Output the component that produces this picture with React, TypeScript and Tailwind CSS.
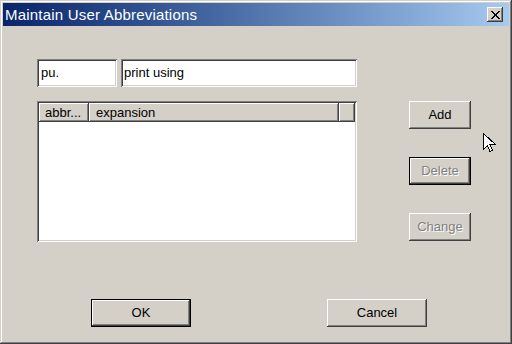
import React from "react";

const raised =
  "shadow-[inset_-1px_-1px_#404040,inset_1px_1px_#ffffff,inset_-2px_-2px_#808080,inset_2px_2px_#d4d0c8]";
const sunken =
  "shadow-[inset_1px_1px_#808080,inset_-1px_-1px_#ffffff,inset_2px_2px_#404040,inset_-2px_-2px_#d4d0c8]";

function Btn({
  label,
  w,
  disabled,
  isDefault,
}: {
  label: string;
  w: string;
  disabled?: boolean;
  isDefault?: boolean;
}) {
  const inner = (
    <div
      className={`flex-1 h-full flex items-center justify-center bg-[#d4d0c8] ${raised} ${
        disabled ? "text-[#808080] [text-shadow:1px_1px_0_#ffffff]" : "text-black"
      }`}
    >
      {label}
    </div>
  );
  return (
    <div className={`${w} h-[28px] flex ${isDefault ? "border border-black" : ""}`}>
      {inner}
    </div>
  );
}

export default function App() {
  return (
    <div
      className={`relative w-[512px] h-[344px] bg-[#d4d0c8] p-[3px] flex flex-col text-[13px] text-black shadow-[inset_-1px_-1px_#404040,inset_1px_1px_#d4d0c8,inset_-2px_-2px_#808080,inset_2px_2px_#ffffff]`}
      style={{ fontFamily: '"Liberation Sans", Arial, sans-serif' }}
    >
      {/* Title bar */}
      <div className="h-[23px] flex items-center pl-[2px] pr-[6px] bg-gradient-to-r from-[#0a246a] to-[#a6caf0]">
        <div className="flex-1 text-white text-[15px] tracking-[0.2px] leading-none">
          Maintain User Abbreviations
        </div>
        <div className={`w-[16px] h-[15px] bg-[#d4d0c8] flex items-center justify-center ${raised}`}>
          <svg width="9" height="8" viewBox="0 0 9 8" shapeRendering="crispEdges">
            <path
              d="M0 0h2v1h1v1h1v1h1V2h1V1h1V0h2v1H8v1H7v1H6v2h1v1h1v1h1v1H7V7H6V6H5V5H4v1H3v1H2v1H0V7h1V6h1V5h1V3H2V2H1V1H0z"
              fill="#000"
            />
          </svg>
        </div>
      </div>

      {/* Body */}
      <div className="flex-1 flex flex-col pl-[34px] pt-[33px]">
        <div className="flex">
          <div className="w-[320px] flex flex-col">
            <div className="flex gap-[4px] h-[28px]">
              <div className={`w-[80px] h-full bg-white flex items-center pl-[4px] pb-[1px] ${sunken}`}>
                pu.
              </div>
              <div className={`w-[236px] h-full bg-white flex items-center pl-[3px] pb-[1px] ${sunken}`}>
                print using
              </div>
            </div>
            <div className={`mt-[14px] h-[141px] bg-white p-[2px] flex flex-col ${sunken}`}>
              <div className="h-[19px] flex bg-[#d4d0c8]">
                <div className={`w-[50px] h-full flex items-center pl-[6px] ${raised}`}>abbr...</div>
                <div className={`w-[250px] h-full flex items-center pl-[7px] ${raised}`}>expansion</div>
                <div className={`flex-1 h-full ${raised}`} />
              </div>
            </div>
          </div>
          <div className="ml-[52px] mt-[42px] flex flex-col gap-[28px]">
            <Btn label="Add" w="w-[62px]" />
            <Btn label="Delete" w="w-[62px]" disabled isDefault />
            <Btn label="Change" w="w-[62px]" disabled />
          </div>
        </div>
        <div className="flex mt-[57px] pl-[54px] gap-[136px]">
          <Btn label="OK" w="w-[100px]" isDefault />
          <Btn label="Cancel" w="w-[100px]" />
        </div>
      </div>

      {/* Mouse cursor */}
      <svg
        className="absolute left-[483px] top-[133px]"
        width="13"
        height="21"
        viewBox="0 0 13 21"
      >
        <path
          d="M0.5 0.5V16.5L4.5 12.5L7 18.5L9.5 17.5L7 11.5H12.5Z"
          fill="#ffffff"
          stroke="#000000"
          strokeWidth="1"
          shapeRendering="crispEdges"
        />
      </svg>
    </div>
  );
}
